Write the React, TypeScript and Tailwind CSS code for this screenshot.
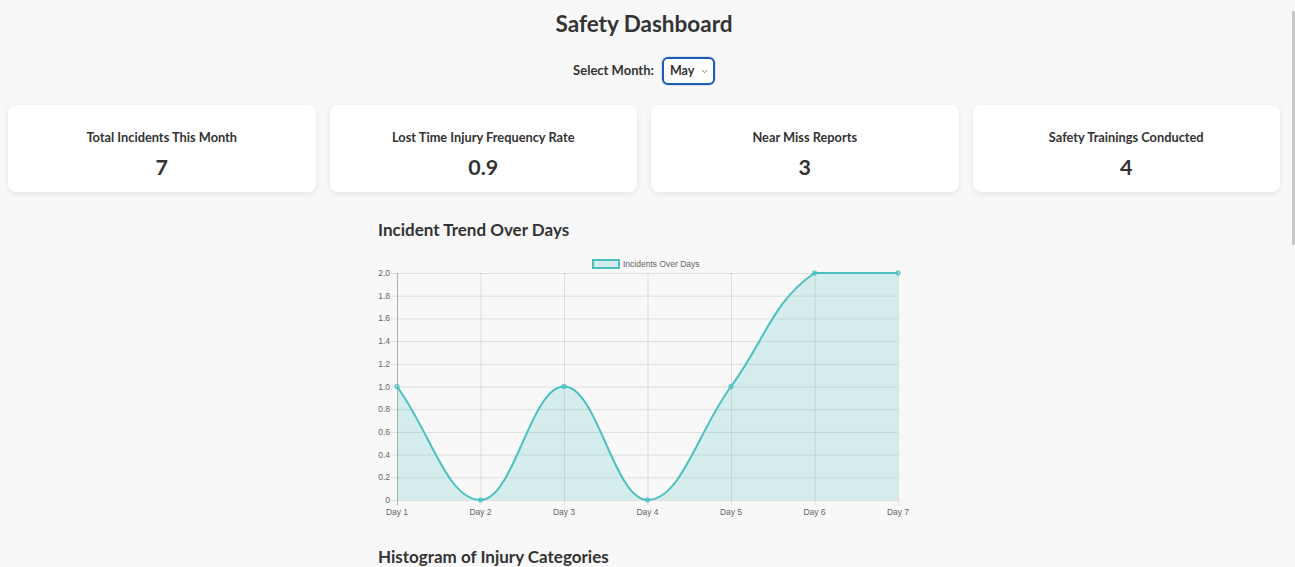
import { ChevronDown } from "lucide-react";

const stats = [
  { label: "Total Incidents This Month", value: "7" },
  { label: "Lost Time Injury Frequency Rate", value: "0.9" },
  { label: "Near Miss Reports", value: "3" },
  { label: "Safety Trainings Conducted", value: "4" },
];

const days = ["Day 1", "Day 2", "Day 3", "Day 4", "Day 5", "Day 6", "Day 7"];
const incidents = [1, 0, 1, 0, 1, 2, 2];

// chart area inside the svg
const left = 19;
const right = 520;
const top = 21;
const bottom = 248;

type Pt = { x: number; y: number };

// same spline as chart.js (tension 0.4), control points kept inside the area
const buildPath = (pts: Pt[]) => {
  const t = 0.4;
  const cps = pts.map((cur, i) => {
    const prev = pts[i - 1] || cur;
    const next = pts[i + 1] || cur;
    const d01 = Math.hypot(cur.x - prev.x, cur.y - prev.y);
    const d12 = Math.hypot(next.x - cur.x, next.y - cur.y);
    let s01 = d01 / (d01 + d12);
    let s12 = d12 / (d01 + d12);
    if (isNaN(s01)) s01 = 0;
    if (isNaN(s12)) s12 = 0;
    const fa = t * s01;
    const fb = t * s12;
    const clampY = (y: number) => Math.min(bottom, Math.max(top, y));
    return {
      prev: { x: cur.x - fa * (next.x - prev.x), y: clampY(cur.y - fa * (next.y - prev.y)) },
      next: { x: cur.x + fb * (next.x - prev.x), y: clampY(cur.y + fb * (next.y - prev.y)) },
    };
  });
  let d = `M${pts[0].x},${pts[0].y}`;
  for (let i = 1; i < pts.length; i++) {
    const a = cps[i - 1].next;
    const b = cps[i].prev;
    d += ` C${a.x},${a.y} ${b.x},${b.y} ${pts[i].x},${pts[i].y}`;
  }
  return d;
};

const TrendChart = () => {
  const step = (right - left) / (days.length - 1);
  const yOf = (v: number) => bottom - (v / 2) * (bottom - top);
  const pts = incidents.map((v, i) => ({ x: left + i * step, y: yOf(v) }));
  const line = buildPath(pts);
  const area = `${line} L${right},${bottom} L${left},${bottom} Z`;
  const ticks = [0, 0.2, 0.4, 0.6, 0.8, 1, 1.2, 1.4, 1.6, 1.8, 2];

  return (
    <svg width="532" height="268" className="block" style={{ fontFamily: "'Liberation Sans', Arial, sans-serif" }}>
      {/* legend */}
      <rect x="215" y="8" width="26" height="8" fill="rgba(75,192,192,0.2)" stroke="rgb(75,192,192)" strokeWidth="2" />
      <text x="245" y="15" fontSize="8.5" fill="#666">Incidents Over Days</text>

      {/* grid */}
      {ticks.map((v) => (
        <g key={v}>
          <line x1={left - 6} x2={right} y1={yOf(v) + 0.5} y2={yOf(v) + 0.5} stroke="rgba(0,0,0,0.1)" />
          <text x={left - 7} y={yOf(v) + 3} fontSize="8.5" fill="#666" textAnchor="end">
            {v === 0 ? "0" : v.toFixed(1)}
          </text>
        </g>
      ))}
      {days.map((d, i) => (
        <g key={d}>
          <line x1={left + i * step + 0.5} x2={left + i * step + 0.5} y1={top} y2={bottom + 5} stroke="rgba(0,0,0,0.1)" />
          <text x={left + i * step} y={bottom + 15} fontSize="8.5" fill="#666" textAnchor="middle">
            {d}
          </text>
        </g>
      ))}
      <line x1={left + 0.5} x2={left + 0.5} y1={top} y2={bottom + 5} stroke="rgba(0,0,0,0.2)" />

      {/* data */}
      <path d={area} fill="rgba(75,192,192,0.2)" />
      <path d={line} fill="none" stroke="rgb(75,192,192)" strokeWidth="2" />
      {pts.map((p, i) => (
        <circle key={i} cx={p.x} cy={p.y} r="2.2" fill="rgba(75,192,192,0.4)" stroke="rgb(75,192,192)" strokeWidth="1" />
      ))}
    </svg>
  );
};

const App = () => {
  return (
    <div className="relative h-screen overflow-hidden bg-[#f8f8f8] pl-2 pr-[15px] text-[#333] font-['Lato',sans-serif]">
      <h1 className="text-center text-[22.5px] leading-[30px] font-bold mt-[9px]">Safety Dashboard</h1>

      <div className="flex justify-center items-center gap-2 mt-[18px]">
        <span className="text-[13px] font-bold">Select Month:</span>
        <div className="flex items-center justify-between h-[28px] w-[53px] pl-[6px] pr-[4px] bg-white border-2 border-[#1c5bb8] rounded-md shadow-[0_0_0_1px_rgba(28,91,184,0.15)]">
          <span className="text-[12.5px] font-bold">May</span>
          <ChevronDown size={9} strokeWidth={2} className="text-[#555]" />
        </div>
      </div>

      <div className="grid grid-cols-4 gap-[14px] mt-5">
        {stats.map((s) => (
          <div key={s.label} className="h-[87px] bg-white rounded-lg shadow-[0_2px_6px_rgba(0,0,0,0.08)] flex flex-col items-center justify-center">
            <h3 className="text-[12.8px] font-bold leading-[18px] mt-[12px]">{s.label}</h3>
            <p className="text-[21.5px] font-bold leading-[28px] mt-[7px]">{s.value}</p>
          </div>
        ))}
      </div>

      <section className="w-[532px] mx-auto mt-[27px]">
        <h2 className="text-[17px] font-bold leading-[22px]">Incident Trend Over Days</h2>
        <div className="mt-[11px]">
          <TrendChart />
        </div>
        <h2 className="text-[17px] font-bold leading-[22px] mt-[26px]">Histogram of Injury Categories</h2>
      </section>

      <div className="absolute right-0 top-[11px] w-[3px] h-[234px] bg-[#c8c8c8]" />
    </div>
  );
};

export default App;
